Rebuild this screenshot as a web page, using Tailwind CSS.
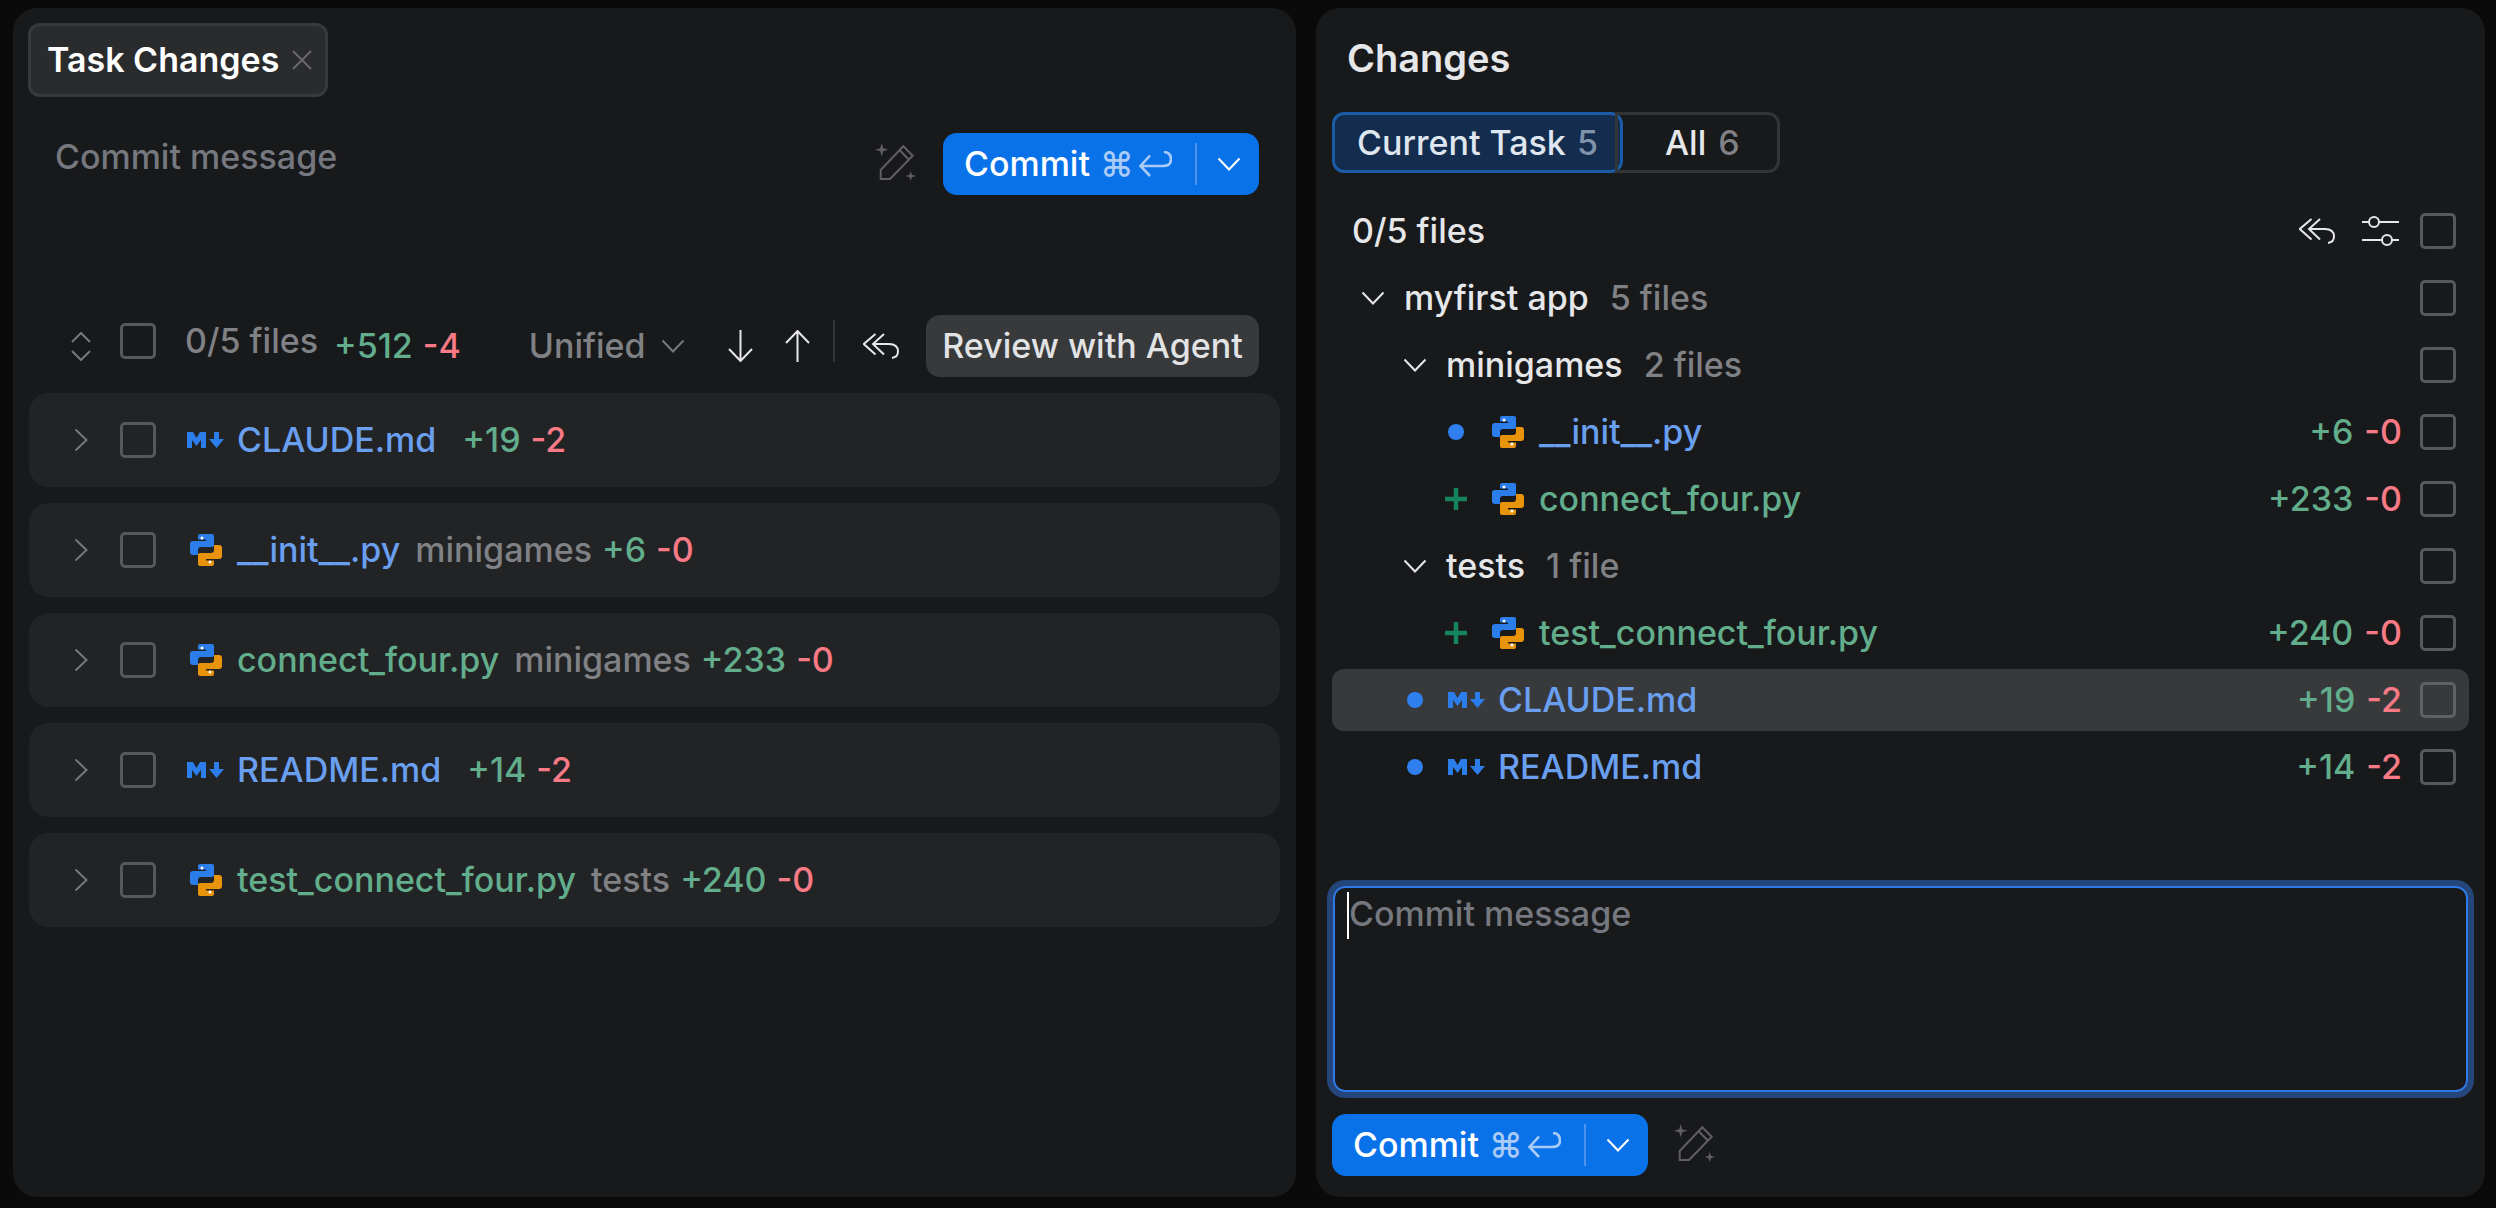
<!DOCTYPE html>
<html lang="en">
<head>
  <meta charset="UTF-8" />
  <title>Task Changes</title>
  <script src="https://cdn.jsdelivr.net/npm/@tailwindcss/browser@4"></script>
</head>
<body class="bg-[#0a0a0a] font-[Inter,'DejaVu_Sans',sans-serif] font-medium text-[34px] leading-[42px] text-[#e6e7e9] w-[2496px] h-[1208px] overflow-hidden">
  <!-- shared icons -->
  <svg class="hidden">
    <symbol id="py" viewBox="0 0 32 32">
      <path fill="#2b7de9" d="M10 0H22Q24 0 24 2V11Q24 13 22 13H11Q8 13 8 16V21H3Q0 21 0 18V10Q0 7 3 7H16V5.5H8V2Q8 0 10 0Z"/>
      <path fill="#e8930c" d="M22 32H10Q8 32 8 30V21Q8 19 10 19H21Q24 19 24 16V11H29Q32 11 32 14V22Q32 25 29 25H16V26.5H24V30Q24 32 22 32Z"/>
      <circle cx="12" cy="4" r="1.5" fill="#fff"/><circle cx="20" cy="28" r="1.5" fill="#fff"/>
    </symbol>
    <symbol id="md" viewBox="0 0 37 16">
      <path fill="#2b7de9" d="M0 0H6L9.5 6L13 0H19V16H14V8L9.5 14L5 8V16H0Z"/>
      <path fill="#2b7de9" d="M27 0H32V7H37L29.5 16L22 7H27Z"/>
    </symbol>
    <symbol id="right" viewBox="0 0 14 24"><path d="M1.5 1.5L12.5 12L1.5 22.5" fill="none" stroke="currentColor" stroke-width="2"/></symbol>
    <symbol id="down" viewBox="0 0 24 14"><path d="M1.5 1.5L12 12.5L22.5 1.5" fill="none" stroke="currentColor" stroke-width="2"/></symbol>
    <symbol id="reply" viewBox="0 0 36 26">
      <path d="M12.5 1L0.8 11L12.5 21.5M21 1L10 11L21 21.5M10 11H26Q35 11 35 18.5Q35 24 29 25" fill="none" stroke="currentColor" stroke-width="2"/>
    </symbol>
    <symbol id="wand" viewBox="0 0 42 39">
      <path d="M5.7 36V27L28.3 3.3L37.7 12.7L15 36ZM24.5 7L34 16.7" fill="none" stroke="currentColor" stroke-width="2"/>
      <path d="M6.7 0L8.2 5.2L13.4 6.7L8.2 8.2L6.7 13.4L5.2 8.2L0 6.7L5.2 5.2ZM35.7 28L36.9 31.8L40.7 33L36.9 34.2L35.7 38L34.5 34.2L30.7 33L34.5 31.8Z" fill="currentColor"/>
    </symbol>
    <symbol id="enter" viewBox="0 0 33 26">
      <path d="M11 4.5L1.5 15L11 25M1.5 15H24Q32 15 32 8.5Q32 1.5 25 1" fill="none" stroke="currentColor" stroke-width="2.6"/>
    </symbol>
    <symbol id="plus" viewBox="0 0 22 22"><path d="M11 0V22M0 11H22" stroke="#14855f" stroke-width="4.5"/></symbol>
  </svg>

  <div class="flex gap-[20px] pl-[13px] pt-[8px]">
    <!-- left panel -->
    <section class="w-[1283px] h-[1189px] bg-[#18191b] rounded-[24px] flex flex-col">
      <div class="mt-[15px] ml-[15px] w-[300px] h-[74px] flex items-center pl-[16px] bg-[#2a2b2d] border-[3px] border-[#38393b] rounded-[12px]">
        <span class="font-semibold text-white">Task Changes</span>
        <svg class="ml-[13px] w-[20px] h-[20px] text-[#68696c]" viewBox="0 0 20 20"><path d="M1 1L19 19M19 1L1 19" stroke="currentColor" stroke-width="2"/></svg>
      </div>

      <div class="mt-[36px] ml-[42px] mr-[37px] h-[62px] flex">
        <span class="text-[#75787e] mt-[3px]">Commit message</span>
        <svg class="ml-auto mt-[10px] w-[42px] h-[39px] text-[#5f5f62]"><use href="#wand"/></svg>
        <div class="ml-[26px] w-[316px] h-[62px] bg-[#0a72e8] rounded-[14px] flex items-center pl-[21px] text-white">
          <span>Commit</span>
          <span class="ml-[10px] text-[#a9cbf6]">⌘</span>
          <svg class="ml-[5px] w-[33px] h-[26px] text-[#a9cbf6]"><use href="#enter"/></svg>
          <span class="ml-[23px] w-[2px] h-[42px] bg-[#4d93ed]"></span>
          <svg class="ml-[20px] w-[24px] h-[14px] text-white"><use href="#down"/></svg>
        </div>
      </div>

      <div class="mt-[120px] ml-[58px] mr-[37px] h-[62px] flex items-center">
        <svg class="w-[20px] h-[29px] text-[#77787b]" viewBox="0 0 20 29"><path d="M1 10L10 1L19 10M1 19L10 28L19 19" fill="none" stroke="currentColor" stroke-width="2"/></svg>
        <span class="ml-[29px] w-[36px] h-[36px] border-[3px] border-[#57585a] rounded-[5px] mb-[10px]"></span>
        <span class="ml-[29px] text-[#808184] mb-[10px]">0/5 files</span>
        <span class="ml-[16px] text-[#62ad8c]">+512</span>
        <span class="ml-[10px] text-[#f77a86]">-4</span>
        <span class="ml-[68px] text-[#808184]">Unified</span>
        <svg class="ml-[15px] w-[24px] h-[14px] text-[#77787b]"><use href="#down"/></svg>
        <svg class="ml-[43px] w-[25px] h-[32px] text-[#e6e7e9]" viewBox="0 0 25 32"><path d="M12.5 0V31M1 19L12.5 31L24 19" fill="none" stroke="currentColor" stroke-width="2"/></svg>
        <svg class="ml-[32px] w-[25px] h-[32px] text-[#e6e7e9]" viewBox="0 0 25 32"><path d="M12.5 32V1M1 13L12.5 1L24 13" fill="none" stroke="currentColor" stroke-width="2"/></svg>
        <span class="ml-[23px] w-[2px] h-[42px] bg-[#333436] mb-[10px]"></span>
        <svg class="ml-[28px] w-[36px] h-[26px] text-[#e6e7e9]"><use href="#reply"/></svg>
        <div class="ml-auto w-[333px] h-[62px] bg-[#38393b] rounded-[14px] flex items-center justify-center text-[#e2e3e5]">Review with Agent</div>
      </div>

      <div class="mt-[16px] mx-[16px] flex flex-col gap-[16px]">
        <div class="h-[94px] bg-[#222325] rounded-[20px] flex items-center text-[#77787b]">
          <svg class="ml-[45px] w-[14px] h-[24px]"><use href="#right"/></svg>
          <span class="ml-[32px] w-[36px] h-[36px] border-[3px] border-[#57585a] rounded-[5px]"></span>
          <svg class="ml-[31px] w-[37px] h-[16px]"><use href="#md"/></svg>
          <span class="ml-[13px] text-[#6a9ff0]">CLAUDE.md</span>
          <span class="ml-[26px] text-[#62ad8c]">+19</span>
          <span class="ml-[10px] text-[#f77a86]">-2</span>
        </div>
        <div class="h-[94px] bg-[#222325] rounded-[20px] flex items-center text-[#77787b]">
          <svg class="ml-[45px] w-[14px] h-[24px]"><use href="#right"/></svg>
          <span class="ml-[32px] w-[36px] h-[36px] border-[3px] border-[#57585a] rounded-[5px]"></span>
          <svg class="ml-[34px] w-[32px] h-[32px]"><use href="#py"/></svg>
          <span class="ml-[15px] text-[#6a9ff0]">__init__.py</span>
          <span class="ml-[15px] text-[#808184]">minigames</span>
          <span class="ml-[10px] text-[#62ad8c]">+6</span>
          <span class="ml-[10px] text-[#f77a86]">-0</span>
        </div>
        <div class="h-[94px] bg-[#222325] rounded-[20px] flex items-center text-[#77787b]">
          <svg class="ml-[45px] w-[14px] h-[24px]"><use href="#right"/></svg>
          <span class="ml-[32px] w-[36px] h-[36px] border-[3px] border-[#57585a] rounded-[5px]"></span>
          <svg class="ml-[34px] w-[32px] h-[32px]"><use href="#py"/></svg>
          <span class="ml-[15px] text-[#62ad8c]">connect_four.py</span>
          <span class="ml-[15px] text-[#808184]">minigames</span>
          <span class="ml-[10px] text-[#62ad8c]">+233</span>
          <span class="ml-[10px] text-[#f77a86]">-0</span>
        </div>
        <div class="h-[94px] bg-[#222325] rounded-[20px] flex items-center text-[#77787b]">
          <svg class="ml-[45px] w-[14px] h-[24px]"><use href="#right"/></svg>
          <span class="ml-[32px] w-[36px] h-[36px] border-[3px] border-[#57585a] rounded-[5px]"></span>
          <svg class="ml-[31px] w-[37px] h-[16px]"><use href="#md"/></svg>
          <span class="ml-[13px] text-[#6a9ff0]">README.md</span>
          <span class="ml-[26px] text-[#62ad8c]">+14</span>
          <span class="ml-[10px] text-[#f77a86]">-2</span>
        </div>
        <div class="h-[94px] bg-[#222325] rounded-[20px] flex items-center text-[#77787b]">
          <svg class="ml-[45px] w-[14px] h-[24px]"><use href="#right"/></svg>
          <span class="ml-[32px] w-[36px] h-[36px] border-[3px] border-[#57585a] rounded-[5px]"></span>
          <svg class="ml-[34px] w-[32px] h-[32px]"><use href="#py"/></svg>
          <span class="ml-[15px] text-[#62ad8c]">test_connect_four.py</span>
          <span class="ml-[15px] text-[#808184]">tests</span>
          <span class="ml-[10px] text-[#62ad8c]">+240</span>
          <span class="ml-[10px] text-[#f77a86]">-0</span>
        </div>
      </div>
    </section>

    <!-- right panel -->
    <section class="w-[1169px] h-[1189px] bg-[#18191b] rounded-[24px] flex flex-col">
      <h2 class="mt-[29px] ml-[31px] h-[42px] text-[38px] font-semibold text-[#e6e7e9]">Changes</h2>

      <div class="mt-[33px] ml-[16px] flex w-[448px] h-[61px]">
        <div class="w-[291px] bg-[#142d4f] border-[3px] border-[#1c5ba5] rounded-[12px] flex items-center pl-[22px] text-[#dfe6ef]">Current Task<span class="ml-[11px] text-[#7f93ac]">5</span></div>
        <div class="flex-1 -ml-[8px] pl-[47px] border-[3px] border-[#333436] rounded-r-[12px] flex items-center">All<span class="ml-[12px] text-[#808184]">6</span></div>
      </div>

      <div class="mt-[27px] mx-[16px] flex flex-col gap-[5px]">
        <div class="h-[62px] flex items-center pl-[20px] pr-[13px]">
          <span>0/5 files</span>
          <svg class="ml-auto w-[36px] h-[26px]"><use href="#reply"/></svg>
          <svg class="ml-[27px] w-[37px] h-[32px]" viewBox="0 0 37 32"><path d="M0 7H37M0 25H37" stroke="currentColor" stroke-width="2"/><circle cx="12" cy="7" r="5" fill="#18191b" stroke="currentColor" stroke-width="2"/><circle cx="25" cy="25" r="5" fill="#18191b" stroke="currentColor" stroke-width="2"/></svg>
          <span class="ml-[21px] w-[36px] h-[36px] border-[3px] border-[#57585a] rounded-[5px]"></span>
        </div>
        <div class="h-[62px] flex items-center pl-[29px] pr-[13px]">
          <svg class="w-[24px] h-[14px]"><use href="#down"/></svg>
          <span class="ml-[19px]">myfirst app</span>
          <span class="ml-[21px] text-[#808184]">5 files</span>
          <span class="ml-auto w-[36px] h-[36px] border-[3px] border-[#57585a] rounded-[5px]"></span>
        </div>
        <div class="h-[62px] flex items-center pl-[71px] pr-[13px]">
          <svg class="w-[24px] h-[14px]"><use href="#down"/></svg>
          <span class="ml-[19px]">minigames</span>
          <span class="ml-[21px] text-[#808184]">2 files</span>
          <span class="ml-auto w-[36px] h-[36px] border-[3px] border-[#57585a] rounded-[5px]"></span>
        </div>
        <div class="h-[62px] flex items-center pl-[113px] pr-[13px]">
          <span class="w-[22px] flex justify-center"><span class="w-[16px] h-[16px] rounded-full bg-[#2f7fee]"></span></span>
          <svg class="ml-[25px] w-[32px] h-[32px]"><use href="#py"/></svg>
          <span class="ml-[15px] text-[#6a9ff0]">__init__.py</span>
          <span class="ml-auto text-[#62ad8c]">+6</span>
          <span class="ml-[11px] text-[#f77a86]">-0</span>
          <span class="ml-[18px] w-[36px] h-[36px] border-[3px] border-[#57585a] rounded-[5px]"></span>
        </div>
        <div class="h-[62px] flex items-center pl-[113px] pr-[13px]">
          <svg class="w-[22px] h-[22px]"><use href="#plus"/></svg>
          <svg class="ml-[25px] w-[32px] h-[32px]"><use href="#py"/></svg>
          <span class="ml-[15px] text-[#62ad8c]">connect_four.py</span>
          <span class="ml-auto text-[#62ad8c]">+233</span>
          <span class="ml-[11px] text-[#f77a86]">-0</span>
          <span class="ml-[18px] w-[36px] h-[36px] border-[3px] border-[#57585a] rounded-[5px]"></span>
        </div>
        <div class="h-[62px] flex items-center pl-[71px] pr-[13px]">
          <svg class="w-[24px] h-[14px]"><use href="#down"/></svg>
          <span class="ml-[19px]">tests</span>
          <span class="ml-[21px] text-[#808184]">1 file</span>
          <span class="ml-auto w-[36px] h-[36px] border-[3px] border-[#57585a] rounded-[5px]"></span>
        </div>
        <div class="h-[62px] flex items-center pl-[113px] pr-[13px]">
          <svg class="w-[22px] h-[22px]"><use href="#plus"/></svg>
          <svg class="ml-[25px] w-[32px] h-[32px]"><use href="#py"/></svg>
          <span class="ml-[15px] text-[#62ad8c]">test_connect_four.py</span>
          <span class="ml-auto text-[#62ad8c]">+240</span>
          <span class="ml-[11px] text-[#f77a86]">-0</span>
          <span class="ml-[18px] w-[36px] h-[36px] border-[3px] border-[#57585a] rounded-[5px]"></span>
        </div>
        <div class="h-[62px] flex items-center pl-[72px] pr-[13px] bg-[#38393b] rounded-[12px]">
          <span class="w-[22px] flex justify-center"><span class="w-[16px] h-[16px] rounded-full bg-[#2f7fee]"></span></span>
          <svg class="ml-[22px] w-[37px] h-[16px]"><use href="#md"/></svg>
          <span class="ml-[13px] text-[#6a9ff0]">CLAUDE.md</span>
          <span class="ml-auto text-[#62ad8c]">+19</span>
          <span class="ml-[11px] text-[#f77a86]">-2</span>
          <span class="ml-[18px] w-[36px] h-[36px] border-[3px] border-[#5f6062] rounded-[5px]"></span>
        </div>
        <div class="h-[62px] flex items-center pl-[72px] pr-[13px]">
          <span class="w-[22px] flex justify-center"><span class="w-[16px] h-[16px] rounded-full bg-[#2f7fee]"></span></span>
          <svg class="ml-[22px] w-[37px] h-[16px]"><use href="#md"/></svg>
          <span class="ml-[13px] text-[#6a9ff0]">README.md</span>
          <span class="ml-auto text-[#62ad8c]">+14</span>
          <span class="ml-[11px] text-[#f77a86]">-2</span>
          <span class="ml-[18px] w-[36px] h-[36px] border-[3px] border-[#57585a] rounded-[5px]"></span>
        </div>
      </div>

      <div class="mt-auto ml-[17px] mr-[17px] h-[206px] border-2 border-[#2f7ae5] rounded-[12px] ring-[6px] ring-[#24467a] flex items-start pl-[12px] pt-[4px]">
        <span class="w-[2px] h-[47px] bg-white shrink-0"></span>
        <span class="text-[#75787e] mt-[1px]">Commit message</span>
      </div>

      <div class="mt-[22px] mb-[21px] ml-[16px] flex">
        <div class="w-[316px] h-[62px] bg-[#0a72e8] rounded-[14px] flex items-center pl-[21px] text-white">
          <span>Commit</span>
          <span class="ml-[10px] text-[#a9cbf6]">⌘</span>
          <svg class="ml-[5px] w-[33px] h-[26px] text-[#a9cbf6]"><use href="#enter"/></svg>
          <span class="ml-[23px] w-[2px] h-[42px] bg-[#4d93ed]"></span>
          <svg class="ml-[20px] w-[24px] h-[14px] text-white"><use href="#down"/></svg>
        </div>
        <svg class="ml-[26px] mt-[10px] w-[42px] h-[39px] text-[#5f5f62]"><use href="#wand"/></svg>
      </div>
    </section>
  </div>
</body>
</html>
